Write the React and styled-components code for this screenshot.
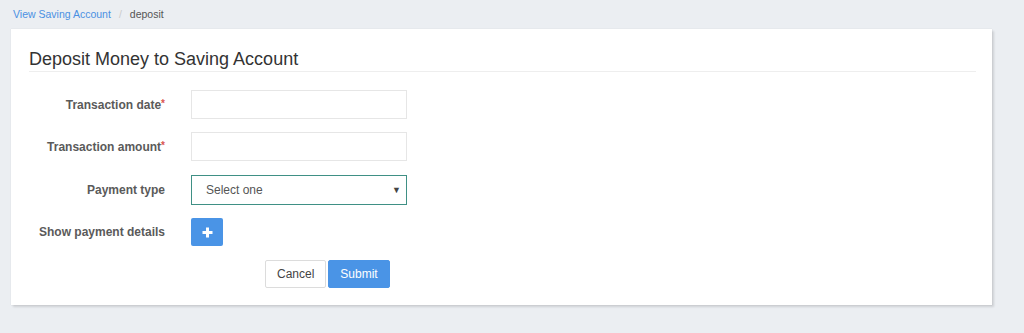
import React from "react";
import styled, { createGlobalStyle } from "styled-components";

const Global = createGlobalStyle`
  html, body { margin: 0; padding: 0; background: #ebeef2; }
  body { font-family: "Liberation Sans", Arial, sans-serif; color: #333; }
`;

const Page = styled.div`
  width: 1024px;
  height: 333px;
  background: #ebeef2;
  box-sizing: border-box;
  padding: 0 32px 0 11px;
`;

const Breadcrumb = styled.nav`
  height: 29px;
  display: flex;
  align-items: center;
  padding: 0 0 1px 2px;
  font-size: 10.5px;
  box-sizing: border-box;
`;

const Crumb = styled.span`
  color: ${(p) => (p.$active ? "#4a90e2" : "#555")};
`;

const Sep = styled.span`
  color: #ccc;
  margin: 0 8px;
`;

const Card = styled.div`
  background: #fff;
  height: 276px;
  box-sizing: border-box;
  padding: 20px 16px 17px 18px;
  box-shadow: 0 0 1px rgba(0, 0, 0, 0.12), 2px 2px 2px rgba(0, 0, 0, 0.12);
`;

const Title = styled.h3`
  margin: 0;
  font-weight: normal;
  font-size: 18px;
  line-height: 21px;
  color: #333;
  padding-bottom: 1px;
  border-bottom: 1px solid #eee;
`;

const Form = styled.form`
  margin-top: 18px;
  display: flex;
  flex-direction: column;
`;

const Row = styled.div`
  display: grid;
  grid-template-columns: 136px 216px;
  column-gap: 26px;
  align-items: center;
  height: ${(p) => p.$h}px;
  margin-bottom: ${(p) => p.$mb || 0}px;
`;

const Label = styled.label`
  text-align: right;
  font-weight: bold;
  font-size: 12px;
  color: #5a5a5a;
`;

const Req = styled.span`
  color: #d9534f;
  font-size: 10px;
  vertical-align: 2px;
`;

const Input = styled.input`
  height: 100%;
  width: 100%;
  box-sizing: border-box;
  border: 1px solid #e6e6e6;
  background: #fff;
  outline: none;
  padding: 0 12px;
`;

const SelectBox = styled.div`
  position: relative;
  height: 100%;
  box-sizing: border-box;
  border: 1px solid #3f9085;
  display: flex;
  align-items: center;
  padding: 0 14px;
  font-size: 12px;
  color: #555;
`;

const Arrow = styled.span`
  position: absolute;
  right: 5px;
  top: 50%;
  transform: translateY(-50%);
  font-size: 9px;
  color: #444;
`;

const IconButton = styled.button`
  width: 32px;
  height: 100%;
  border: none;
  border-radius: 2px;
  background: #4a94e6;
  display: flex;
  align-items: center;
  justify-content: center;
  padding: 0;
`;

const Actions = styled.div`
  display: flex;
  gap: 2px;
  margin-left: 236px;
  height: 28px;
`;

const Btn = styled.button`
  height: 28px;
  box-sizing: border-box;
  font-family: "Liberation Sans", Arial, sans-serif;
  font-size: 12px;
  padding: 0 11px;
  border-radius: 2px;
  border: 1px solid ${(p) => (p.$primary ? "#4a94e6" : "#dcdcdc")};
  background: ${(p) => (p.$primary ? "#4a94e6" : "#fff")};
  color: ${(p) => (p.$primary ? "#fff" : "#444")};
`;

export default function App() {
  return (
    <>
      <Global />
      <Page>
        <Breadcrumb>
          <Crumb $active>View Saving Account</Crumb>
          <Sep>/</Sep>
          <Crumb>deposit</Crumb>
        </Breadcrumb>
        <Card>
          <Title>Deposit Money to Saving Account</Title>
          <Form onSubmit={(e) => e.preventDefault()}>
            <Row $h={29} $mb={13}>
              <Label>
                Transaction date<Req>*</Req>
              </Label>
              <Input />
            </Row>
            <Row $h={29} $mb={14}>
              <Label>
                Transaction amount<Req>*</Req>
              </Label>
              <Input />
            </Row>
            <Row $h={30} $mb={13}>
              <Label>Payment type</Label>
              <SelectBox>
                Select one
                <Arrow>▼</Arrow>
              </SelectBox>
            </Row>
            <Row $h={28} $mb={14}>
              <Label>Show payment details</Label>
              <IconButton type="button">
                <svg width="11" height="11" viewBox="0 0 11 11">
                  <path d="M5.5 0.5v10M0.5 5.5h10" stroke="#fff" strokeWidth="3" />
                </svg>
              </IconButton>
            </Row>
            <Actions>
              <Btn type="button">Cancel</Btn>
              <Btn $primary type="submit">Submit</Btn>
            </Actions>
          </Form>
        </Card>
      </Page>
    </>
  );
}
